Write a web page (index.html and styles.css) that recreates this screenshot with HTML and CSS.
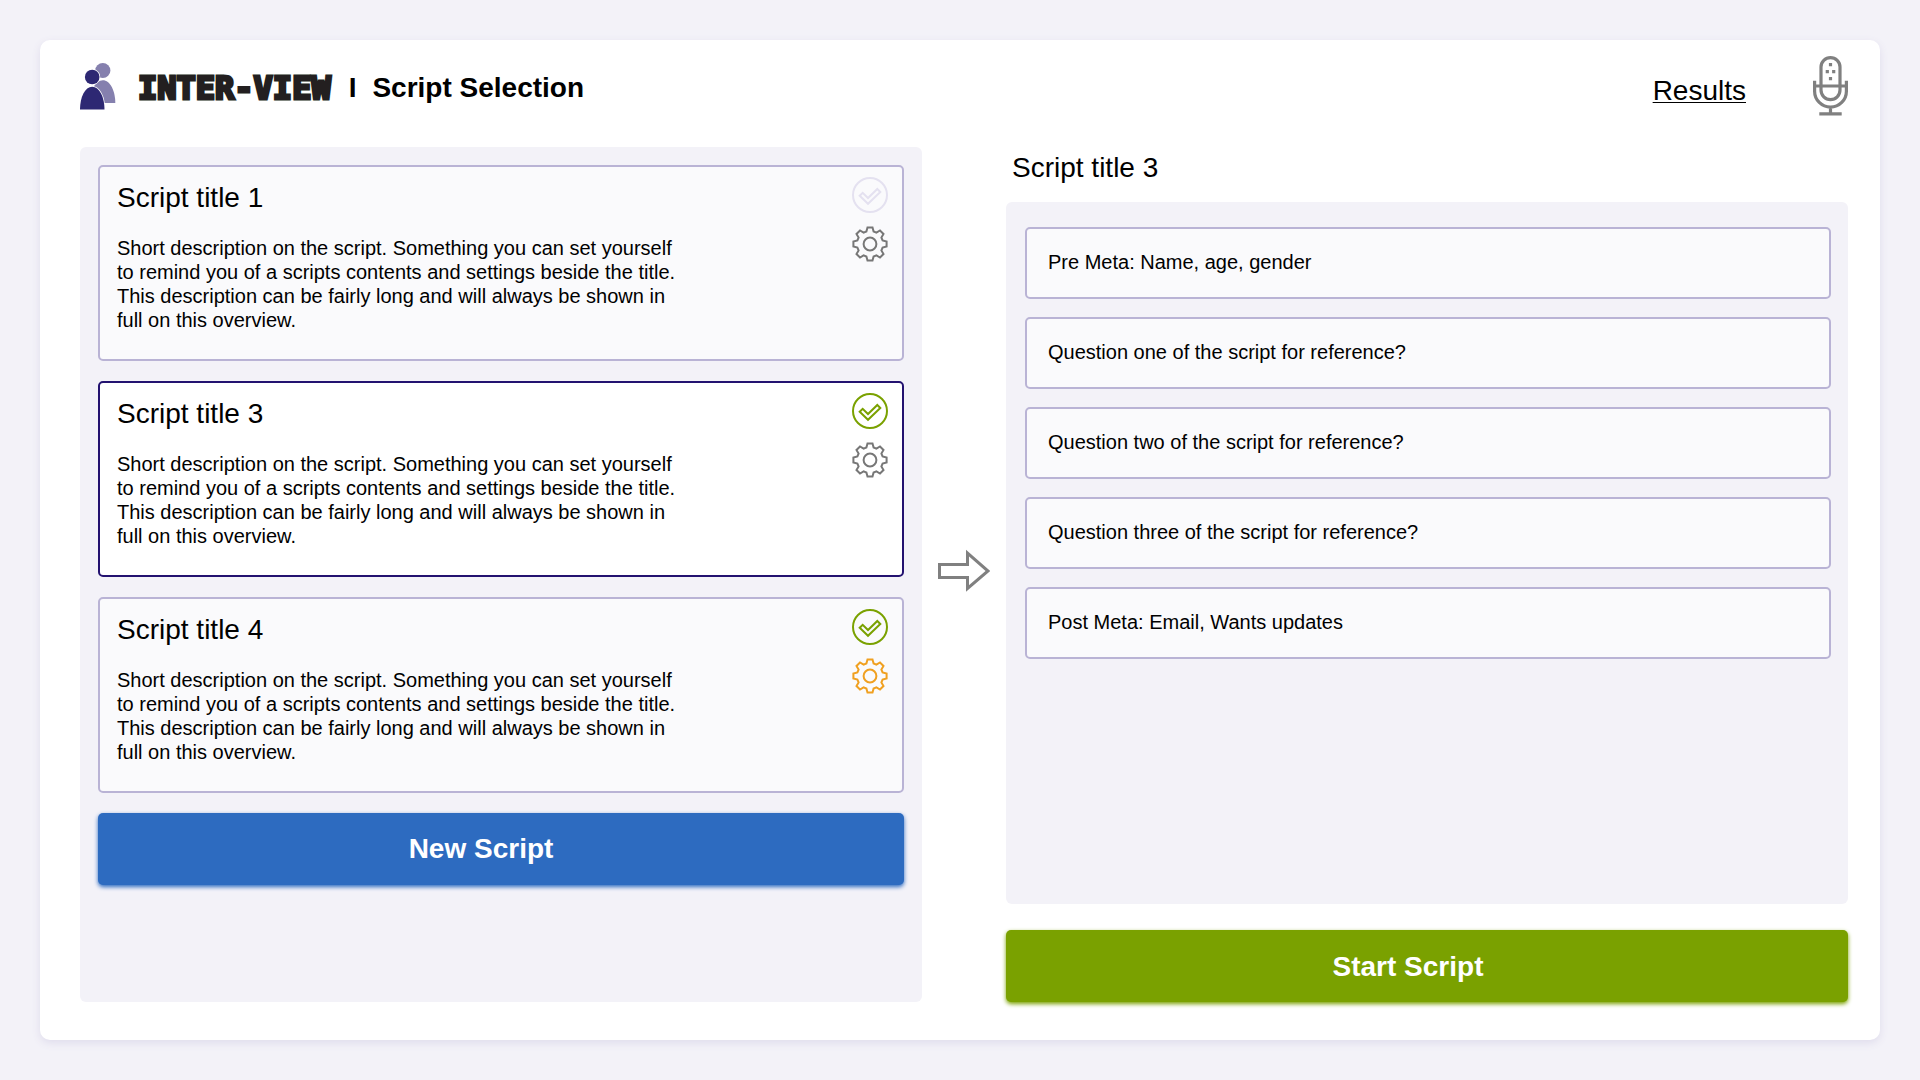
FILE: index.html
```html
<!DOCTYPE html>
<html lang="en">
<head>
  <meta charset="utf-8">
  <meta name="viewport" content="width=device-width, initial-scale=1">
  <title>Inter-View | Script Selection</title>
  <link rel="stylesheet" href="styles.css">
</head>
<body>
  <svg class="sprite" aria-hidden="true">
    <symbol id="icon-check" viewBox="-18 -18 36 36">
      <circle r="17"/>
      <path d="M-10.3 .8L-7.3-2.2L-2 3L7.3-6L10.3-3L-2 8.8Z"/>
    </symbol>
    <symbol id="icon-gear" viewBox="-18 -18 36 36">
      <circle r="6.4"/>
      <path d="M-3.6-12.6L-2.5-16.6H2.5L3.6-12.6L6.4-11.4L10-13.5L13.5-10L11.4-6.4L12.6-3.6L16.6-2.5V2.5L12.6 3.6L11.4 6.4L13.5 10L10 13.5L6.4 11.4L3.6 12.6L2.5 16.6H-2.5L-3.6 12.6L-6.4 11.4L-10 13.5L-13.5 10L-11.4 6.4L-12.6 3.6L-16.6 2.5V-2.5L-12.6-3.6L-11.4-6.4L-13.5-10L-10-13.5L-6.4-11.4Z"/>
    </symbol>
  </svg>

  <div class="app">
    <header class="header">
      <svg class="logo" viewBox="0 0 36 47" aria-hidden="true">
        <g fill="#8580ae">
          <ellipse cx="22.8" cy="7.5" rx="7.6" ry="7.5"/>
          <path d="M10 40C10 27 15.500 17.300 22.800 17.300S35.300 28 35.300 40Z"/>
        </g>
        <g fill="#2d2873" stroke="#fff" stroke-width="1.400" paint-order="stroke">
          <ellipse cx="12.200" cy="14" rx="7.300" ry="7.300"/>
          <path d="M0 46.500C0 34 5 23.700 12.200 23.700S24.500 34 24.500 46.500Z"/>
        </g>
      </svg>
      <div class="heading">
        <span class="brand">INTER-VIEW</span>
        <span class="divider">I</span>
        <h1 class="page-title">Script Selection</h1>
      </div>
      <a class="results" href="#results">Results</a>
      <button class="icon-button" type="button" aria-label="Microphone">
        <svg class="mic" viewBox="0 0 35 60" aria-hidden="true">
          <g fill="none" stroke="#808080" stroke-width="3.200">
            <rect x="8" y="1.600" width="19" height="42" rx="9.500"/>
            <path d="M1.600 24.700V35.200A15.900 15.900 0 0 0 33.400 35.200V24.700M1.600 30H33.400M17.500 51V57M6.300 57.800H28.700"/>
          </g>
          <path fill="#808080" d="M15.900 7h3.200v3.200h-3.200zM12.700 14h3.200v3.200h-3.200zM19.100 14h3.200v3.200h-3.200zM15.900 21h3.200v3.200h-3.200z"/>
        </svg>
      </button>
    </header>

    <main class="columns">
      <section class="panel scripts" aria-label="Scripts">
        <article class="script">
          <div class="script-text">
            <h2 class="title">Script title 1</h2>
            <p class="description">Short description on the script. Something you can set yourself to remind you of a scripts contents and settings beside the title. This description can be fairly long and will always be shown in full on this overview.</p>
          </div>
          <div class="script-icons">
            <button class="icon-button" type="button" aria-label="Select"><svg class="icon muted"><use href="#icon-check"/></svg></button>
            <button class="icon-button" type="button" aria-label="Settings"><svg class="icon"><use href="#icon-gear"/></svg></button>
          </div>
        </article>
        <article class="script selected">
          <div class="script-text">
            <h2 class="title">Script title 3</h2>
            <p class="description">Short description on the script. Something you can set yourself to remind you of a scripts contents and settings beside the title. This description can be fairly long and will always be shown in full on this overview.</p>
          </div>
          <div class="script-icons">
            <button class="icon-button" type="button" aria-label="Select"><svg class="icon ready"><use href="#icon-check"/></svg></button>
            <button class="icon-button" type="button" aria-label="Settings"><svg class="icon"><use href="#icon-gear"/></svg></button>
          </div>
        </article>
        <article class="script">
          <div class="script-text">
            <h2 class="title">Script title 4</h2>
            <p class="description">Short description on the script. Something you can set yourself to remind you of a scripts contents and settings beside the title. This description can be fairly long and will always be shown in full on this overview.</p>
          </div>
          <div class="script-icons">
            <button class="icon-button" type="button" aria-label="Select"><svg class="icon ready"><use href="#icon-check"/></svg></button>
            <button class="icon-button" type="button" aria-label="Settings"><svg class="icon warning"><use href="#icon-gear"/></svg></button>
          </div>
        </article>
        <button class="button new" type="button">New Script</button>
      </section>

      <div class="arrow">
        <svg width="52" height="44" viewBox="0 0 52 44" aria-hidden="true">
          <path d="M1.500 15.500H29.500V4L50 22L29.500 39.500V28.500H1.500Z" fill="none" stroke="#808080" stroke-width="3"/>
        </svg>
      </div>

      <section class="preview">
        <h2 class="title preview-title">Script title 3</h2>
        <ul class="panel questions">
          <li class="question">Pre Meta: Name, age, gender</li>
          <li class="question">Question one of the script for reference?</li>
          <li class="question">Question two of the script for reference?</li>
          <li class="question">Question three of the script for reference?</li>
          <li class="question">Post Meta: Email, Wants updates</li>
        </ul>
        <button class="button start" type="button">Start Script</button>
      </section>
    </main>
  </div>
</body>
</html>
```
FILE: styles.css
```css
* {
  box-sizing: border-box;
}

body {
  margin: 0;
  padding: 40px;
  background: #f3f2f8;
  color: #000;
  font: 20px/24px "Liberation Sans", Arial, sans-serif;
}

h1,
h2,
p,
ul {
  margin: 0;
  padding: 0;
}

.sprite {
  display: none;
}

.app {
  display: flex;
  flex-direction: column;
  min-height: calc(100vh - 80px);
  padding: 16px 32px 38px 40px;
  background: #fff;
  border-radius: 10px;
  box-shadow: 0 3px 8px #dfdcec;
}

.header {
  display: flex;
  align-items: center;
  margin-bottom: 31px;
}

.logo {
  width: 36px;
  height: 47px;
}

.heading {
  display: flex;
  align-items: center;
  padding-top: 4px;
}

.brand {
  margin: 0 18px 0 22px;
  color: #231f20;
  font: bold 32px/36px "DejaVu Sans Mono", monospace;
  -webkit-text-stroke: 3px #231f20;
}

.divider,
.page-title {
  font-size: 28px;
  font-weight: bold;
  line-height: 32px;
}

.page-title {
  margin-left: 16px;
}

.results {
  margin-left: auto;
  margin-right: 67px;
  padding-top: 10px;
  color: inherit;
  font-size: 28px;
  line-height: 32px;
  text-decoration-thickness: 1px;
  text-underline-offset: 2px;
}

.icon-button {
  display: block;
  padding: 0;
  background: none;
  border: 0;
  cursor: pointer;
}

.mic {
  display: block;
  width: 35px;
  height: 60px;
}

.columns {
  display: grid;
  flex: 1;
  grid-template-columns: 1fr 84px 1fr;
}

.panel {
  background: #f3f2f8;
  border-radius: 6px;
}

.scripts {
  display: flex;
  flex-direction: column;
  gap: 20px;
  padding: 18px;
}

.script {
  display: flex;
  justify-content: space-between;
  padding: 10px 14px 27px 17px;
  background: #fafafc;
  border: 2px solid #b9b3d5;
  border-radius: 5px;
}

.selected {
  background: #fff;
  border-color: #231270;
}

.title {
  font-size: 28px;
  font-weight: normal;
  line-height: 42px;
}

.description {
  max-width: 565px;
  margin-top: 17px;
}

.script-icons {
  display: flex;
  flex-direction: column;
  gap: 13px;
}

.icon {
  display: block;
  width: 36px;
  height: 36px;
  fill: none;
  stroke: #777;
  stroke-width: 2px;
}

.muted {
  stroke: #e4e1f0;
}

.ready {
  stroke: #7aa100;
}

.warning {
  stroke: #f0a020;
}

.button {
  height: 72px;
  padding: 0 40px 0 0;
  border: 0;
  border-radius: 5px;
  color: #fff;
  font: bold 28px/32px "Liberation Sans", Arial, sans-serif;
  cursor: pointer;
}

.new {
  background: #2d6bc0;
  box-shadow: 0 2px 4px #2d6bc0;
}

.start {
  padding: 2px 38px 0 0;
  background: #7aa100;
  box-shadow: 0 2px 4px #7aa100;
}

.arrow {
  display: flex;
  align-items: center;
  justify-content: center;
  padding-bottom: 8px;
}

.preview {
  display: flex;
  flex-direction: column;
}

.preview-title {
  margin-bottom: 13px;
  padding-left: 6px;
}

.questions {
  display: flex;
  flex: 1;
  flex-direction: column;
  gap: 18px;
  margin-bottom: 26px;
  padding: 25px 17px 25px 19px;
  list-style: none;
}

.question {
  padding: 21px 21px 23px;
  background: #fafafc;
  border: 2px solid #b9b3d5;
  border-radius: 5px;
}
```
